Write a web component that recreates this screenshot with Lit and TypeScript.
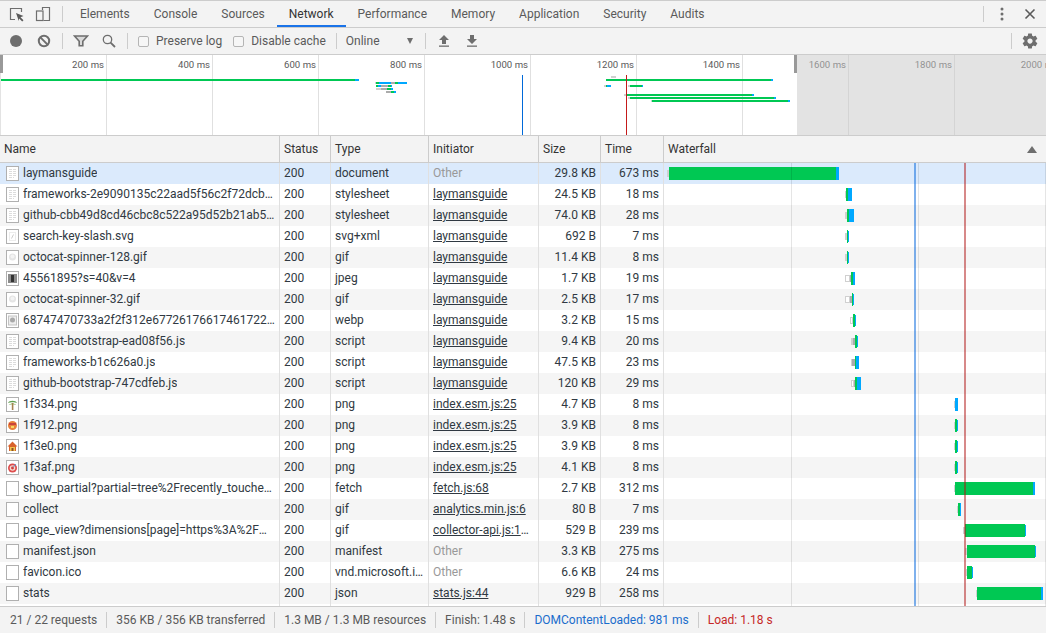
import { LitElement, html, css, svg } from 'lit';
import { customElement } from 'lit/decorators.js';

type Seg = [string, number, number];

interface Row {
  name: string;
  type: string;
  init: string;
  size: string;
  time: string;
  icon: string;
  segs: Seg[];
}

const TABS = ['Elements', 'Console', 'Sources', 'Network', 'Performance', 'Memory', 'Application', 'Security', 'Audits'];
const LABELS = ['200 ms', '400 ms', '600 ms', '800 ms', '1000 ms', '1200 ms', '1400 ms', '1600 ms', '1800 ms', '2000 ms'];
const LM = 'laymansguide';
const ESM = 'index.esm.js:25';

// segment x values are page coordinates, the waterfall column starts at 664
const ROWS: Row[] = [
  { name: LM, type: 'document', init: 'Other', size: '29.8 KB', time: '673 ms', icon: 'doc', segs: [['o', 667, 669], ['c', 669, 836], ['b', 836, 839]] },
  { name: 'frameworks-2e9090135c22aad5f56c2f72dcbd1d3f0.css', type: 'stylesheet', init: LM, size: '24.5 KB', time: '18 ms', icon: 'doc', segs: [['g', 845, 846], ['c', 846, 848], ['b', 848, 852]] },
  { name: 'github-cbb49d8cd46cbc8c522a95d52b21ab5e81a.css', type: 'stylesheet', init: LM, size: '74.0 KB', time: '28 ms', icon: 'doc', segs: [['g', 845, 847], ['c', 847, 849], ['b', 849, 854]] },
  { name: 'search-key-slash.svg', type: 'svg+xml', init: LM, size: '692 B', time: '7 ms', icon: 'slash', segs: [['g', 845, 847], ['c', 847, 848], ['t', 848, 849]] },
  { name: 'octocat-spinner-128.gif', type: 'gif', init: LM, size: '11.4 KB', time: '8 ms', icon: 'spin', segs: [['g', 845, 847], ['c', 847, 848], ['t', 848, 849]] },
  { name: '45561895?s=40&v=4', type: 'jpeg', init: LM, size: '1.7 KB', time: '19 ms', icon: 'photo', segs: [['o', 845, 850], ['d', 850, 851], ['c', 851, 853], ['b', 853, 855]] },
  { name: 'octocat-spinner-32.gif', type: 'gif', init: LM, size: '2.5 KB', time: '17 ms', icon: 'spin', segs: [['o', 845, 850], ['d', 850, 852], ['c', 852, 853], ['t', 853, 854]] },
  { name: '68747470733a2f2f312e67726176617461722e636f6d2f75', type: 'webp', init: LM, size: '3.2 KB', time: '15 ms', icon: 'octo', segs: [['o', 850, 853], ['c', 853, 855], ['t', 855, 856]] },
  { name: 'compat-bootstrap-ead08f56.js', type: 'script', init: LM, size: '9.4 KB', time: '20 ms', icon: 'doc', segs: [['g', 851, 853], ['d', 853, 855], ['c', 855, 857], ['t', 857, 858]] },
  { name: 'frameworks-b1c626a0.js', type: 'script', init: LM, size: '47.5 KB', time: '23 ms', icon: 'doc', segs: [['g', 851, 852], ['d', 852, 855], ['c', 855, 856], ['b', 856, 859]] },
  { name: 'github-bootstrap-747cdfeb.js', type: 'script', init: LM, size: '120 KB', time: '29 ms', icon: 'doc', segs: [['o', 851, 854], ['d', 854, 855], ['c', 855, 857], ['b', 857, 861]] },
  { name: '1f334.png', type: 'png', init: ESM, size: '4.7 KB', time: '8 ms', icon: 'tree', segs: [['g', 954, 955], ['b', 955, 958]] },
  { name: '1f912.png', type: 'png', init: ESM, size: '3.9 KB', time: '8 ms', icon: 'face', segs: [['g', 954, 955], ['c', 955, 957], ['t', 957, 958]] },
  { name: '1f3e0.png', type: 'png', init: ESM, size: '3.9 KB', time: '8 ms', icon: 'house', segs: [['g', 954, 955], ['c', 955, 957], ['t', 957, 958]] },
  { name: '1f3af.png', type: 'png', init: ESM, size: '4.1 KB', time: '8 ms', icon: 'target', segs: [['g', 954, 955], ['c', 955, 957], ['t', 957, 958]] },
  { name: 'show_partial?partial=tree%2Frecently_touched_branches_list', type: 'fetch', init: 'fetch.js:68', size: '2.7 KB', time: '312 ms', icon: 'blank', segs: [['g', 954, 955], ['c', 955, 1033], ['b', 1033, 1035]] },
  { name: 'collect', type: 'gif', init: 'analytics.min.js:6', size: '80 B', time: '7 ms', icon: 'blank', segs: [['g', 957, 958], ['c', 958, 960], ['b', 960, 961]] },
  { name: 'page_view?dimensions[page]=https%3A%2F%2Fgithub.com%2F', type: 'gif', init: 'collector-api.js:142', size: '529 B', time: '239 ms', icon: 'blank', segs: [['g', 963, 965], ['c', 965, 1025], ['t', 1025, 1026]] },
  { name: 'manifest.json', type: 'manifest', init: 'Other', size: '3.3 KB', time: '275 ms', icon: 'blank', segs: [['g', 965, 967], ['c', 967, 1035], ['t', 1035, 1036]] },
  { name: 'favicon.ico', type: 'vnd.microsoft.icon', init: 'Other', size: '6.6 KB', time: '24 ms', icon: 'blank', segs: [['g', 966, 967], ['c', 967, 972], ['t', 972, 973]] },
  { name: 'stats', type: 'json', init: 'stats.js:44', size: '929 B', time: '258 ms', icon: 'blank', segs: [['g', 976, 977], ['c', 977, 1041], ['b', 1041, 1043]] },
];

// overview strip: [top y inside the strip, segments]
const OVERVIEW: [number, Seg[]][] = [
  [24, [['c', 1, 355], ['b', 355, 359]]],
  [27, [['g', 375, 376], ['c', 376, 379], ['b', 379, 391], ['d', 391, 395], ['c', 395, 398], ['b', 398, 407]]],
  [30, [['c', 376, 378], ['b', 378, 381], ['d', 381, 388], ['c', 388, 391], ['b', 391, 392]]],
  [33, [['g', 376, 381], ['d', 381, 387], ['c', 387, 391], ['b', 391, 393]]],
  [36, [['d', 386, 391], ['c', 391, 394], ['b', 394, 396]]],
  [21, [['g', 611, 616]]],
  [24, [['c', 606, 771], ['b', 771, 773]]],
  [30, [['g', 604, 606], ['c', 606, 607], ['b', 607, 611], ['g', 628, 630], ['c', 630, 642], ['b', 642, 643]]],
  [39, [['g', 624, 627], ['c', 627, 752], ['b', 752, 754]]],
  [42, [['g', 628, 630], ['c', 630, 774], ['b', 774, 776]]],
  [45, [['g', 651, 652], ['c', 652, 788], ['b', 788, 790]]],
];

const GEAR = 'M19.43 12.98c.04-.32.07-.64.07-.98s-.03-.66-.07-.98l2.11-1.65c.19-.15.24-.42.12-.64l-2-3.46c-.12-.22-.39-.3-.61-.22l-2.49 1c-.52-.4-1.08-.73-1.69-.98l-.38-2.65C14.46 2.18 14.25 2 14 2h-4c-.25 0-.46.18-.49.42l-.38 2.65c-.61.25-1.17.59-1.69.98l-2.49-1c-.23-.09-.49 0-.61.22l-2 3.46c-.13.22-.07.49.12.64l2.11 1.65c-.04.32-.07.65-.07.98s.03.66.07.98l-2.11 1.65c-.19.15-.24.42-.12.64l2 3.46c.12.22.39.3.61.22l2.49-1c.52.4 1.08.73 1.69.98l.38 2.65c.03.24.24.42.49.42h4c.25 0 .46-.18.49-.42l.38-2.65c.61-.25 1.17-.59 1.69-.98l2.49 1c.23.09.49 0 .61-.22l2-3.46c.12-.22.07-.49-.12-.64l-2.11-1.65zM12 15.5c-1.93 0-3.5-1.57-3.5-3.5s1.57-3.5 3.5-3.5 3.5 1.57 3.5 3.5-1.57 3.5-3.5 3.5z';

function thumb(kind: string) {
  switch (kind) {
    case 'doc':
      return svg`<path d="M3 3.5h7M3 5.5h7M3 7.5h7M3 9.5h7M3 11.5h5" stroke="#dcdcdc" stroke-width="1" stroke-dasharray="3 1"/>`;
    case 'slash':
      return svg`<rect x="3.5" y="3.5" width="6" height="8" fill="none" stroke="#ececec"/><path d="M7.5 5.5l-2 4" stroke="#ccc"/>`;
    case 'spin':
      return svg`<circle cx="6.5" cy="7" r="3.5" fill="#e4e4e4"/><circle cx="6.5" cy="6.5" r="2" fill="#f3f3f3"/>`;
    case 'photo':
      return svg`<rect x="2" y="3" width="9" height="9" fill="#8c8c8c"/><rect x="5" y="4" width="3" height="7" fill="#333"/>`;
    case 'octo':
      return svg`<rect x="2.5" y="3" width="8" height="9" fill="#eee" stroke="#c4c4c4"/><circle cx="6.5" cy="7" r="2.5" fill="#a8a8a8"/>`;
    case 'tree':
      return svg`<path d="M2 6c1-3 8-3 9 0-2-1-7-1-9 0z" fill="#5f9e4f"/><path d="M3 8c1-2 6-2 7 0-2-1-5-1-7 0z" fill="#86b45a"/><rect x="5.8" y="6" width="1.6" height="7" fill="#a5814f"/>`;
    case 'face':
      return svg`<circle cx="6.5" cy="7.5" r="4.5" fill="#e8823a"/><rect x="3" y="5" width="7" height="2" fill="#c9443a"/><rect x="5" y="8" width="3" height="2" fill="#f6d860"/>`;
    case 'house':
      return svg`<path d="M6.5 2.5L11.5 7.5H10V12H3V7.5H1.5z" fill="#d8622b"/><rect x="4" y="8" width="5" height="4" fill="#f2c24b"/><rect x="5.5" y="9" width="2" height="3" fill="#8a4f24"/>`;
    case 'target':
      return svg`<circle cx="6.5" cy="8" r="4.5" fill="#dd4b4b"/><circle cx="6.5" cy="8" r="2.8" fill="#f4d9d0"/><circle cx="6.5" cy="8" r="1.4" fill="#d5342f"/><path d="M7 7.5l3-3.5" stroke="#5b9bd5"/>`;
  }
  return null;
}

function fileIcon(kind: string) {
  return html`<svg class="file" width="13" height="15" viewBox="0 0 13 15">
    <rect x=".5" y=".5" width="12" height="14" fill="#fff" stroke="#b0b0b0"/>
    ${thumb(kind)}
  </svg>`;
}

@customElement('app-root')
export class AppRoot extends LitElement {
  static override styles = css`
    :host {
      display: flex;
      flex-direction: column;
      width: 1046px;
      height: 633px;
      overflow: hidden;
      background: #fff;
      font-family: Roboto, 'Liberation Sans', sans-serif;
      font-size: 12px;
      color: #303942;
    }

    svg {
      display: block;
    }

    .bar {
      display: flex;
      align-items: center;
      flex: none;
      background: #f3f3f3;
      border-bottom: 1px solid #ccc;
      box-sizing: border-box;
    }

    .tabs {
      height: 28px;
      padding-left: 4px;
      border-top: 1px solid #ccc;
    }

    .tools {
      height: 27px;
      padding-left: 2px;
    }

    .btn {
      display: flex;
      align-items: center;
      justify-content: center;
      flex: none;
      width: 28px;
      height: 24px;
    }

    .btn.narrow {
      width: 26px;
    }

    .sep {
      flex: none;
      width: 1px;
      height: 16px;
      margin: 0 4px;
      background: #ccc;
    }

    .tabs .first {
      margin: 0 5px 0 6px;
    }

    .tab {
      display: flex;
      align-items: center;
      height: 26px;
      padding: 2px 12px 0;
      box-sizing: border-box;
      color: #5a5a5a;
      border-bottom: 2px solid transparent;
    }

    .tab.active {
      color: #333;
      border-bottom-color: #1a73e8;
    }

    .grow {
      flex: 1;
    }

    .check {
      flex: none;
      width: 11px;
      height: 11px;
      margin: 0 7px 0 6px;
      border: 1px solid #b5b5b5;
      border-radius: 2px;
      box-sizing: border-box;
      background: #f6f6f6;
    }

    .check.next {
      margin-left: 11px;
    }

    .lbl {
      color: #5a5a5a;
      white-space: nowrap;
    }

    .sep.wide {
      margin: 0 9px 0 10px;
    }

    .select {
      display: flex;
      align-items: center;
      justify-content: space-between;
      width: 67px;
      margin-right: 8px;
      color: #5a5a5a;
    }

    .select i {
      border-left: 3.5px solid transparent;
      border-right: 3.5px solid transparent;
      border-top: 6px solid #6e6e6e;
    }

    .overview {
      position: relative;
      flex: none;
      height: 81px;
      padding-left: 1px;
      box-sizing: border-box;
      display: grid;
      grid-template-columns: repeat(10, 106px);
      border-bottom: 1px solid #ccc;
      overflow: hidden;
    }

    .tick {
      padding: 3px 2px 0 0;
      line-height: 14px;
      font-size: 9.6px;
      text-align: right;
      color: #5a5a5a;
      border-right: 1px solid #e0e0e0;
      white-space: nowrap;
    }

    .seg {
      position: absolute;
      display: block;
    }

    .ov {
      height: 2px;
    }

    .seg.c {
      background: #00c853;
    }

    .seg.b,
    .seg.t {
      background: #00a8ff;
    }

    .seg.g {
      background: #d0d0d0;
    }

    .seg.d {
      background: #ababab;
    }

    .seg.o {
      box-sizing: border-box;
      border: 1px solid #d0d0d0;
      background: #fff;
    }

    .marker {
      position: absolute;
      top: 20px;
      bottom: 0;
      width: 1px;
    }

    .marker.dcl {
      left: 522px;
      background: #0069d9;
    }

    .marker.load {
      left: 626px;
      background: #c41a1a;
    }

    .shade {
      position: absolute;
      top: 0;
      bottom: 0;
      right: 0;
      left: 797px;
      background: rgba(200, 200, 200, 0.5);
    }

    .shade.left {
      left: 0;
      right: auto;
      width: 1px;
    }

    .handle {
      position: absolute;
      top: 0;
      height: 18px;
      width: 3px;
      background: #999;
    }

    .handle.a {
      left: 0;
    }

    .handle.z {
      left: 794px;
    }

    .table {
      position: relative;
      flex: 1;
      min-height: 0;
    }

    .row {
      display: grid;
      grid-template-columns: 280px 51px 98px 110px 62px 63px 382px;
      height: 21px;
      line-height: 21px;
    }

    .row.even {
      background: #f5f5f5;
    }

    .row.sel {
      background: #dbeafc;
    }

    .row.head {
      height: 27px;
      line-height: 26px;
      background: #f3f3f3;
      border-bottom: 1px solid #ccc;
      box-sizing: border-box;
    }

    .row.end {
      height: 2px;
    }

    .cell {
      padding: 0 4px;
      overflow: hidden;
      white-space: nowrap;
      text-overflow: ellipsis;
      border-right: 1px solid #e0e0e0;
    }

    .head .cell {
      border-right-color: #ccc;
      color: #333;
    }

    .cell.num {
      text-align: right;
    }

    .cell.name {
      display: flex;
      align-items: center;
      padding-left: 6px;
    }

    .cell.name span {
      overflow: hidden;
      text-overflow: ellipsis;
    }

    .file {
      flex: none;
      margin-right: 4px;
    }

    .cell.link {
      text-decoration: underline;
    }

    .cell.muted {
      color: #999;
    }

    .cell.fall {
      position: relative;
      padding: 0;
      border-right: 0;
    }

    .head .fall {
      display: flex;
      justify-content: space-between;
      align-items: center;
      padding: 0 9px 0 4px;
    }

    .head .fall i {
      border-left: 5px solid transparent;
      border-right: 5px solid transparent;
      border-bottom: 7px solid #6e6e6e;
    }

    .wf {
      top: 4px;
      height: 13px;
    }

    .wf.g,
    .wf.d,
    .wf.o {
      top: 7px;
      height: 7px;
    }

    .wf.t {
      top: 5px;
      height: 11px;
    }

    .guides {
      position: absolute;
      top: 27px;
      bottom: 0;
      left: 664px;
      right: 0;
      pointer-events: none;
    }

    .guide {
      position: absolute;
      top: 0;
      bottom: 0;
      width: 1px;
      background: rgba(0, 0, 0, 0.1);
    }

    .guide.dcl {
      width: 2px;
      background: rgba(0, 100, 220, 0.5);
    }

    .guide.load {
      width: 2px;
      background: rgba(175, 20, 20, 0.5);
    }

    .status {
      flex: none;
      height: 27px;
      padding-left: 10px;
      border-top: 1px solid #ccc;
      border-bottom: 0;
      color: #5a5a5a;
    }

    .status .sep {
      margin: 0 9px 0 9px;
    }

    .status .blue {
      color: #1a6dcc;
    }

    .status .red {
      color: #c62828;
    }
  `;

  private seg(s: Seg, cls: string, offset: number, top?: number) {
    const pos = `left:${s[1] - offset}px;width:${s[2] - s[1]}px;` + (top === undefined ? '' : `top:${top}px;`);
    return html`<span class="seg ${cls} ${s[0]}" style=${pos}></span>`;
  }

  private renderTabBar() {
    return html`
      <div class="bar tabs">
        <div class="btn narrow">
          <svg width="16" height="16" viewBox="0 0 16 16" fill="none">
            <path d="M6 13.5H1.5v-11h11V6" stroke="#6e6e6e" stroke-width="1.2"/>
            <path d="M7 7l7.5 3-3 1.2 3 3-1.3 1.3-3-3L9.8 15z" fill="#5a5a5a"/>
          </svg>
        </div>
        <div class="btn narrow">
          <svg width="16" height="16" viewBox="0 0 16 16" fill="none" stroke="#6e6e6e" stroke-width="1.2">
            <path d="M7.5 4V1.5h7v13h-6"/>
            <rect x="1.5" y="5" width="6.5" height="9.5"/>
          </svg>
        </div>
        <div class="sep first"></div>
        ${TABS.map((t) => html`<div class="tab ${t === 'Network' ? 'active' : ''}">${t}</div>`)}
        <div class="grow"></div>
        <div class="sep"></div>
        <div class="btn">
          <svg width="4" height="14" viewBox="0 0 4 14" fill="#6e6e6e">
            <circle cx="2" cy="2" r="1.5"/><circle cx="2" cy="7" r="1.5"/><circle cx="2" cy="12" r="1.5"/>
          </svg>
        </div>
        <div class="btn">
          <svg width="12" height="12" viewBox="0 0 12 12" stroke="#5a5a5a" stroke-width="1.6">
            <path d="M1.5 1.5l9 9M10.5 1.5l-9 9"/>
          </svg>
        </div>
        <div style="width:2px"></div>
      </div>
    `;
  }

  private renderToolbar() {
    return html`
      <div class="bar tools">
        <div class="btn">
          <svg width="14" height="14" viewBox="0 0 14 14"><circle cx="7" cy="7" r="6" fill="#6e6e6e"/></svg>
        </div>
        <div class="btn">
          <svg width="14" height="14" viewBox="0 0 14 14" fill="none" stroke="#6e6e6e" stroke-width="2">
            <circle cx="7" cy="7" r="5.2"/><path d="M3.4 3.4l7.2 7.2"/>
          </svg>
        </div>
        <div class="sep"></div>
        <div class="btn">
          <svg width="16" height="12" viewBox="0 0 16 12" fill="#d9d9d9" stroke="#6e6e6e" stroke-width="1.6">
            <path d="M1.5 1h13L9.8 6.2v4.6H6.2V6.2z"/>
          </svg>
        </div>
        <div class="btn">
          <svg width="14" height="14" viewBox="0 0 14 14" fill="none" stroke="#6e6e6e">
            <circle cx="5.5" cy="5.5" r="4.2" stroke-width="1.3"/><path d="M8.6 8.6l4.4 4.4" stroke-width="1.8"/>
          </svg>
        </div>
        <div class="sep"></div>
        <div class="check"></div>
        <span class="lbl">Preserve log</span>
        <div class="check next"></div>
        <span class="lbl">Disable cache</span>
        <div class="sep wide"></div>
        <div class="select">Online<i></i></div>
        <div class="sep"></div>
        <div class="btn">
          <svg width="12" height="12" viewBox="0 0 12 12" fill="#6e6e6e">
            <path d="M6 0L11 5H8V9H4V5H1z"/><rect x="1" y="10.5" width="10" height="1.3"/>
          </svg>
        </div>
        <div class="btn">
          <svg width="12" height="12" viewBox="0 0 12 12" fill="#6e6e6e">
            <path d="M4 0H8V4H11L6 9 1 4H4z"/><rect x="1" y="10.5" width="10" height="1.3"/>
          </svg>
        </div>
        <div class="grow"></div>
        <div class="sep"></div>
        <div class="btn">
          <svg width="18" height="18" viewBox="0 0 24 24" fill="#6e6e6e"><path d=${GEAR}/></svg>
        </div>
        <div style="width:2px"></div>
      </div>
    `;
  }

  private renderOverview() {
    return html`
      <div class="overview">
        ${LABELS.map((l) => html`<div class="tick">${l}</div>`)}
        ${OVERVIEW.map(([top, segs]) => segs.map((s) => this.seg(s, 'ov', 0, top)))}
        <div class="marker dcl"></div>
        <div class="marker load"></div>
        <div class="shade"></div>
        <div class="shade left"></div>
        <div class="handle a"></div>
        <div class="handle z"></div>
      </div>
    `;
  }

  private renderRow(r: Row, i: number) {
    const cls = i === 0 ? 'sel' : i % 2 === 1 ? '' : 'even';
    const soft = r.init === 'Other';
    return html`
      <div class="row ${cls}">
        <div class="cell name">${fileIcon(r.icon)}<span>${r.name}</span></div>
        <div class="cell">200</div>
        <div class="cell">${r.type}</div>
        <div class="cell ${soft ? 'muted' : 'link'}">${r.init}</div>
        <div class="cell num">${r.size}</div>
        <div class="cell num">${r.time}</div>
        <div class="cell fall">${r.segs.map((s) => this.seg(s, 'wf', 664))}</div>
      </div>
    `;
  }

  override render() {
    return html`
      ${this.renderTabBar()}
      ${this.renderToolbar()}
      ${this.renderOverview()}
      <div class="table">
        <div class="row head">
          <div class="cell">Name</div>
          <div class="cell">Status</div>
          <div class="cell">Type</div>
          <div class="cell">Initiator</div>
          <div class="cell">Size</div>
          <div class="cell">Time</div>
          <div class="cell fall">Waterfall<i></i></div>
        </div>
        ${ROWS.map((r, i) => this.renderRow(r, i))}
        <div class="row end">
          <div class="cell"></div><div class="cell"></div><div class="cell"></div>
          <div class="cell"></div><div class="cell"></div><div class="cell"></div>
        </div>
        <div class="guides">
          ${[127, 254, 381].map((x) => html`<div class="guide" style="left:${x}px"></div>`)}
          <div class="guide dcl" style="left:250px"></div>
          <div class="guide load" style="left:300px"></div>
        </div>
      </div>
      <div class="bar status">
        <span>21 / 22 requests</span><div class="sep"></div>
        <span>356 KB / 356 KB transferred</span><div class="sep"></div>
        <span>1.3 MB / 1.3 MB resources</span><div class="sep"></div>
        <span>Finish: 1.48 s</span><div class="sep"></div>
        <span class="blue">DOMContentLoaded: 981 ms</span><div class="sep"></div>
        <span class="red">Load: 1.18 s</span>
      </div>
    `;
  }
}
